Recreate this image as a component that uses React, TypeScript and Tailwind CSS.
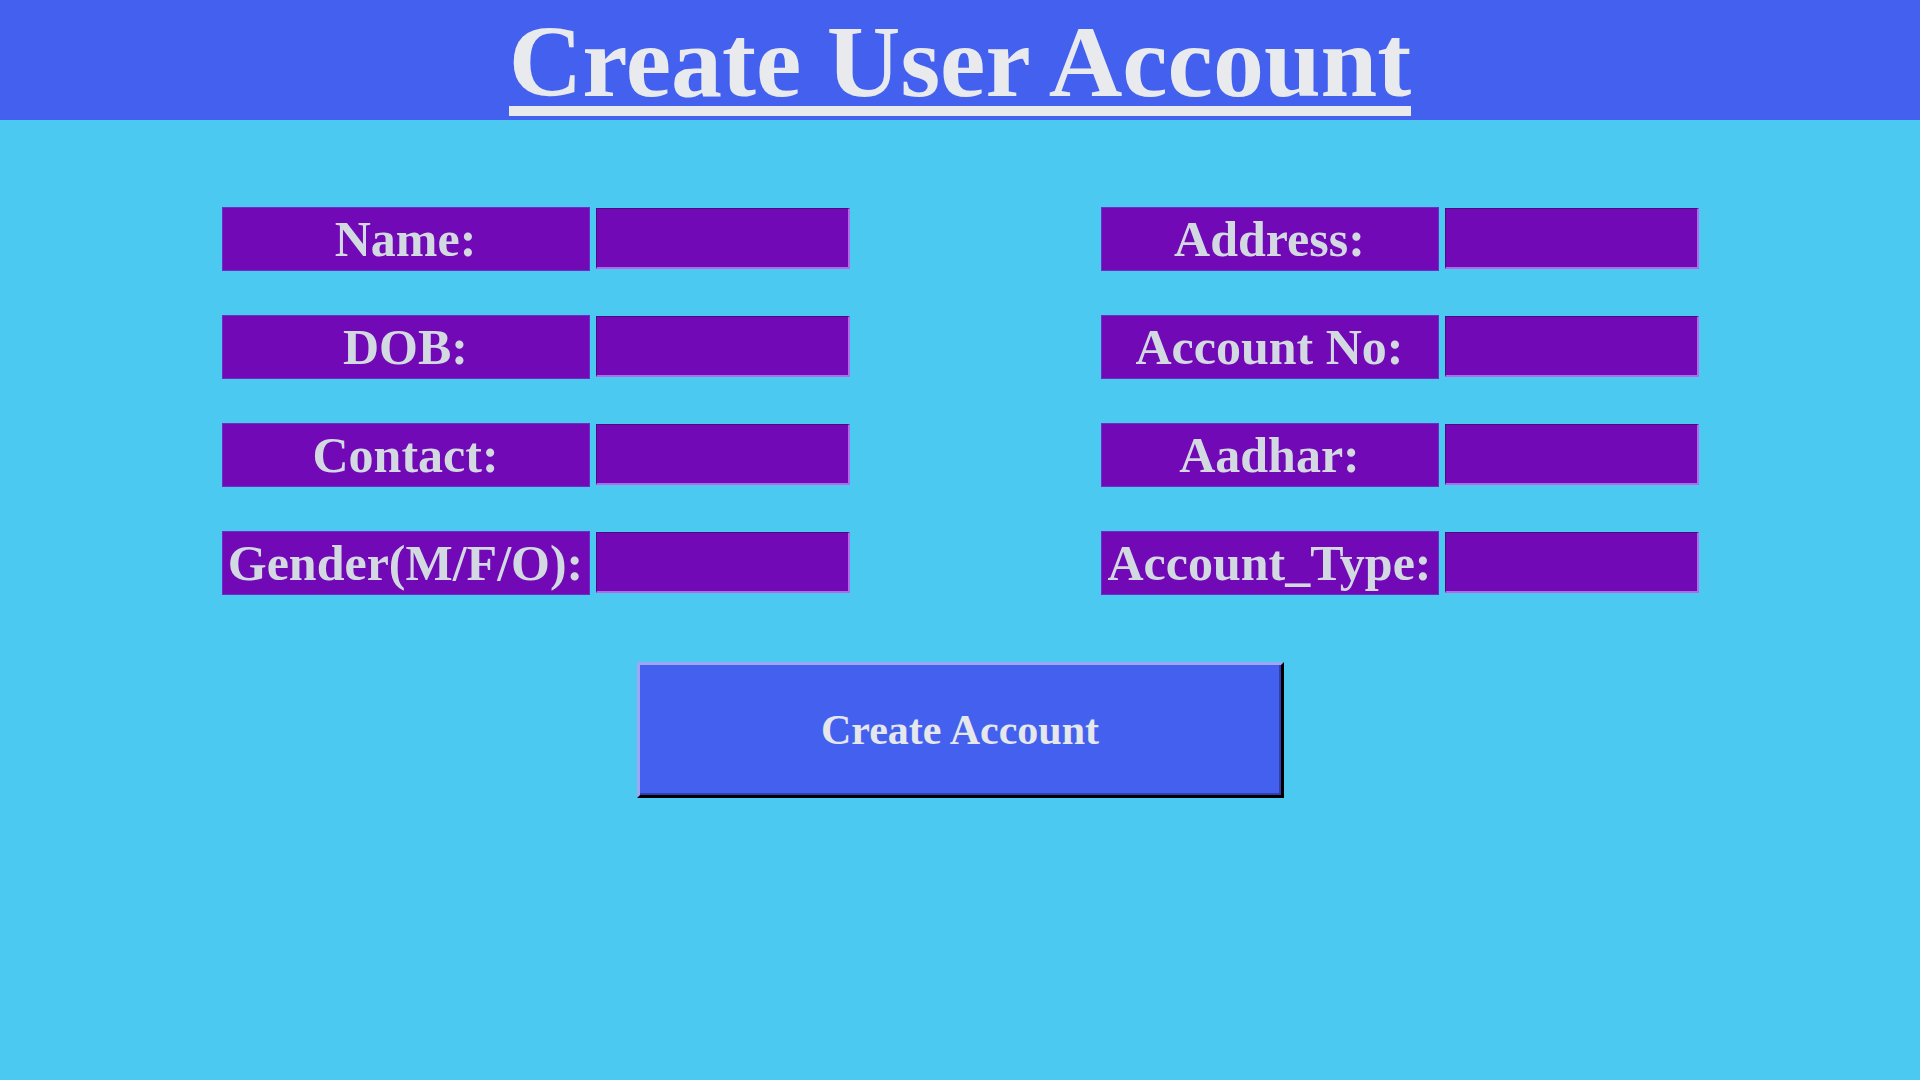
import React from 'react';

const left = ['Name:', 'DOB:', 'Contact:', 'Gender(M/F/O):'];
const right = ['Address:', 'Account No:', 'Aadhar:', 'Account_Type:'];

function Field({ label, width }: { label: string; width: string }) {
  return (
    <>
      <div
        className={`${width} h-[64px] bg-[#7209b7] border border-[#6a2fc8] flex items-center justify-center text-[50px] leading-none font-bold text-[#d3d9e0] whitespace-nowrap`}
      >
        {label}
      </div>
      <input
        type="text"
        className="w-[254px] h-[61px] mt-[1px] bg-[#7209b7] border-t border-l border-[#4b0a80] border-r-2 border-b-2 border-r-[#b06ce6] border-b-[#b06ce6] outline-none text-[#d3d9e0] text-[24px] px-1"
      />
    </>
  );
}

export default function App() {
  return (
    <div className="min-h-screen bg-[#4cc9f0] font-['Liberation_Serif','Times_New_Roman',serif]">
      <header className="h-[120px] bg-[#4361ee] flex justify-center">
        <div className="pt-[18px] flex flex-col items-stretch">
          <h1 className="text-[102px] leading-[88px] font-bold text-[#e8eaee] whitespace-nowrap">Create User Account</h1>
          <div className="h-[10px] bg-[#e8eaee]" />
        </div>
      </header>

      <main className="flex flex-col items-center pt-[87px]">
        <div className="flex gap-[251px]">
          <div className="grid grid-cols-[368px_254px] gap-x-[6px] gap-y-[44px] items-start">
            {left.map((l) => (
              <Field key={l} label={l} width="w-[368px]" />
            ))}
          </div>
          <div className="grid grid-cols-[338px_254px] gap-x-[6px] gap-y-[44px] items-start">
            {right.map((l) => (
              <Field key={l} label={l} width="w-[338px]" />
            ))}
          </div>
        </div>

        <button className="mt-[67px] w-[647px] h-[136px] bg-[#4361ee] border-[3px] border-t-[#9ea7f6] border-l-[#9ea7f6] border-r-black border-b-black shadow-[inset_-2px_-2px_0_#2f3fb0] text-[42px] font-bold text-[#e5e7eb] leading-none">
          Create Account
        </button>
      </main>
    </div>
  );
}
